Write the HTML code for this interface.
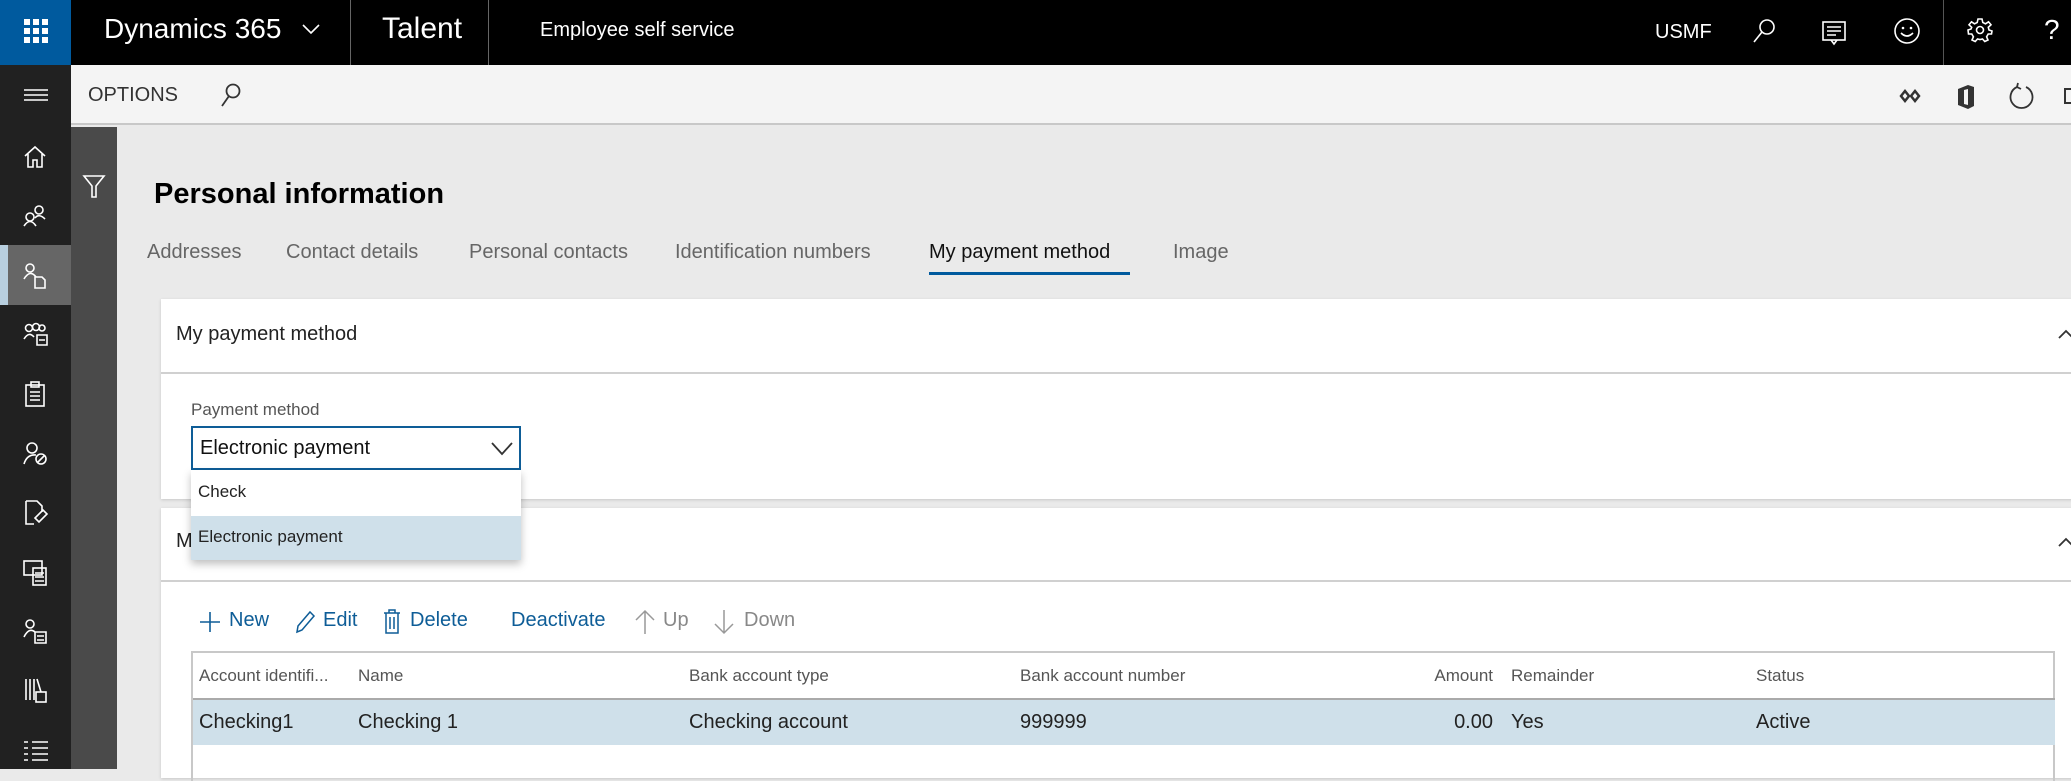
<!DOCTYPE html>
<html><head><meta charset="utf-8"><style>
*{margin:0;padding:0;box-sizing:border-box}
body{width:2071px;height:769px;overflow:hidden;background:#eaeaea;font-family:"Liberation Sans",sans-serif;position:relative;color:#222}
.a{position:absolute;white-space:nowrap}
svg{position:absolute;overflow:visible}
.w{stroke:#fff;fill:none;stroke-width:1.6}
.k{stroke:#333;fill:none;stroke-width:1.8}
.bl{color:#0e5d97}
.g{color:#555}
</style></head><body>
<!-- top bar -->
<div class="a" style="left:0;top:0;width:2071px;height:65px;background:#000"></div>
<div class="a" style="left:0;top:0;width:71px;height:65px;background:#005a9e"></div>
<svg style="left:24px;top:19px" width="26" height="26"><g fill="#fff"><rect x="0" y="0" width="6" height="6"/><rect x="9" y="0" width="6" height="6"/><rect x="18" y="0" width="6" height="6"/><rect x="0" y="9" width="6" height="6"/><rect x="9" y="9" width="6" height="6"/><rect x="18" y="9" width="6" height="6"/><rect x="0" y="18" width="6" height="6"/><rect x="9" y="18" width="6" height="6"/><rect x="18" y="18" width="6" height="6"/></g></svg>
<div class="a" style="left:104px;top:13px;font-size:28px;color:#fff">Dynamics 365</div>
<svg style="left:302px;top:24px" width="18" height="12"><path d="M1 1 L9 9 L17 1" class="w" stroke-width="2"/></svg>
<div class="a" style="left:350px;top:0;width:1px;height:65px;background:#666"></div>
<div class="a" style="left:382px;top:12px;font-size:30px;color:#fff">Talent</div>
<div class="a" style="left:488px;top:0;width:1px;height:65px;background:#666"></div>
<div class="a" style="left:540px;top:19px;font-size:20px;color:#fff">Employee self service</div>
<div class="a" style="left:1655px;top:21px;font-size:20px;color:#fff">USMF</div>
<svg style="left:1752px;top:18px" width="26" height="26"><circle cx="15" cy="9" r="7" class="w"/><path d="M10 14 L2 24" class="w"/></svg>
<svg style="left:1822px;top:21px" width="26" height="26"><rect x="1" y="1" width="22" height="18" class="w"/><path d="M5 6h14M5 10h14M5 14h9M9 19l3 4 3-4" class="w"/></svg>
<svg style="left:1894px;top:18px" width="28" height="28"><circle cx="13" cy="13" r="12" class="w"/><circle cx="9" cy="10" r="1.3" fill="#fff"/><circle cx="17" cy="10" r="1.3" fill="#fff"/><path d="M7 15 Q13 21 19 15" class="w"/></svg>
<div class="a" style="left:1943px;top:0;width:1px;height:65px;background:#555"></div>
<svg style="left:1968px;top:18px" width="24" height="24"><circle cx="12" cy="12" r="3.5" class="w"/><path d="M10 1 H14 L14.8 4.5 L17.5 5.8 L20.5 3.8 L23 6.8 L20.3 9.3 L21 12 L24 13 V13 L23.5 16 L20.2 16 L18.6 18.8 L20 22 L16.8 23.5 L14.5 21 L12 21.5 L9.5 21 L7.2 23.5 L4 22 L5.4 18.8 L3.8 16 L0.5 16 L0 12 L3 11 L3.7 9.3 L1 6.8 L3.5 3.8 L6.5 5.8 L9.2 4.5 Z" class="w" stroke-width="1.5"/></svg>
<div class="a" style="left:2044px;top:14px;font-size:28px;color:#fff;font-weight:300">?</div>
<!-- left rail -->
<div class="a" style="left:0;top:65px;width:71px;height:704px;background:#212121"></div>
<div class="a" style="left:0;top:245px;width:71px;height:60px;background:#666"></div>
<div class="a" style="left:0;top:245px;width:8px;height:60px;background:#b8cfdf"></div>
<svg style="left:24px;top:89px" width="24" height="12"><path d="M0 1h24M0 6h24M0 11h24" class="w"/></svg>
<svg style="left:23px;top:145px" width="24" height="24"><path d="M2 11 L12 2 L22 11 M5 9 V22 H10 V15 H14 V22 H19 V9" class="w"/></svg>
<svg style="left:23px;top:203px" width="24" height="24"><circle cx="7" cy="14" r="4" class="w"/><path d="M1 23 Q7 14 13 23" class="w"/><circle cx="16" cy="7" r="4" class="w"/><path d="M12 15 Q16 10 22 16" class="w"/></svg>
<svg style="left:23px;top:263px" width="24" height="26"><circle cx="7" cy="5" r="4" class="w"/><path d="M1 16 Q7 6 13 14" class="w"/><path d="M12 14 H19 L22 17 V25 H12 Z" class="w"/></svg>
<svg style="left:23px;top:322px" width="26" height="24"><circle cx="6" cy="6" r="3.5" class="w"/><circle cx="13" cy="5" r="3.5" class="w"/><circle cx="19" cy="6" r="3" class="w"/><path d="M1 17 Q6 9 11 15 M14 13 h10 v10 h-10 z M16 18 h6" class="w"/></svg>
<svg style="left:25px;top:381px" width="22" height="26"><rect x="1" y="4" width="18" height="21" class="w"/><rect x="6" y="1" width="8" height="5" class="w"/><path d="M5 11h10M5 15h10M5 19h10" class="w"/></svg>
<svg style="left:23px;top:441px" width="26" height="26"><circle cx="9" cy="7" r="5" class="w"/><path d="M1 23 Q4 13 13 14" class="w"/><circle cx="18" cy="18" r="5" class="w"/><path d="M15 21 L21 15" class="w"/></svg>
<svg style="left:25px;top:500px" width="24" height="26"><path d="M1 1 H12 L17 6 V12 M1 1 V24 H9" class="w"/><path d="M10 18 l4 4 l8 -8 l-4 -4 z" class="w"/></svg>
<svg style="left:23px;top:560px" width="26" height="26"><rect x="1" y="1" width="18" height="14" class="w"/><rect x="10" y="8" width="13" height="17" class="w" fill="#212121"/><path d="M12 13h9M12 17h9M12 21h9" class="w"/></svg>
<svg style="left:23px;top:619px" width="26" height="26"><circle cx="7" cy="5" r="4" class="w"/><path d="M1 18 Q6 8 12 13 M12 13 h11 v11 h-11 z M14 17 h7 M14 21h7" class="w"/></svg>
<svg style="left:24px;top:678px" width="24" height="26"><path d="M2 1 V22 M6 1 V22 M10 1 V22 M13 1 L17 14" class="w"/><rect x="12" y="14" width="10" height="10" class="w"/></svg>
<svg style="left:23px;top:740px" width="26" height="24"><path d="M9 2h16M9 8h16M9 14h16M9 20h16M1 2h4M1 8h4M1 14h4M1 20h4" class="w"/></svg>
<!-- options bar -->
<div class="a" style="left:71px;top:65px;width:2000px;height:60px;background:#f4f4f4;border-bottom:2px solid #c8c8c8"></div>
<div class="a" style="left:88px;top:84px;font-size:20px;color:#333">OPTIONS</div>
<svg style="left:218px;top:83px" width="26" height="26"><circle cx="15" cy="8" r="6.5" class="k" stroke-width="1.5"/><path d="M11 13 L4 23" class="k" stroke-width="1.5"/></svg>
<svg style="left:1900px;top:88px" width="22" height="16"><path d="M1 8 L5 3 L9 8 L5 13 Z M11 8 L15 3 L19 8 L15 13 Z" stroke="#333" stroke-width="2.5" fill="none"/></svg>
<svg style="left:1956px;top:84px" width="20" height="26"><path d="M2 5 L12 1 L18 3 V22 L12 25 L2 21 Z" fill="#333"/><path d="M8 6 L12 5 V21 L8 20 Z" fill="#f4f4f4"/></svg>
<svg style="left:2009px;top:83px" width="26" height="28"><path d="M8 4 A11 11 0 1 0 17 4" class="k" stroke-width="1.4"/><path d="M9 0 L8 4 L12 6" class="k" stroke-width="1.4"/></svg>
<div class="a" style="left:2064px;top:88px;width:10px;height:16px;border:2px solid #333"></div>
<!-- filter sidebar -->
<div class="a" style="left:71px;top:127px;width:46px;height:642px;background:#4a4a4a"></div>
<svg style="left:83px;top:175px" width="22" height="24"><path d="M1 1 H21 L13 11 V22 H9 V11 Z" class="w"/></svg>
<!-- title & tabs -->
<div class="a" style="left:154px;top:178px;font-size:29px;font-weight:bold;color:#000">Personal information</div>
<div class="a g" style="left:147px;top:241px;font-size:20px;color:#666">Addresses</div>
<div class="a g" style="left:286px;top:241px;font-size:20px;color:#666">Contact details</div>
<div class="a g" style="left:469px;top:241px;font-size:20px;color:#666">Personal contacts</div>
<div class="a g" style="left:675px;top:241px;font-size:20px;color:#666">Identification numbers</div>
<div class="a" style="left:929px;top:241px;font-size:20px;color:#111">My payment method</div>
<div class="a" style="left:929px;top:272px;width:201px;height:3px;background:#005a9e"></div>
<div class="a g" style="left:1173px;top:241px;font-size:20px;color:#666">Image</div>
<!-- card 1 -->
<div class="a" style="left:161px;top:299px;width:1920px;height:200px;background:#fff;box-shadow:0 1px 3px rgba(0,0,0,.15)"></div>
<div class="a" style="left:176px;top:323px;font-size:20px;color:#222">My payment method</div>
<svg style="left:2058px;top:329px" width="14" height="10"><path d="M1 9 L8 2 L15 9" class="k" stroke="#666" stroke-width="1.5"/></svg>
<div class="a" style="left:161px;top:372px;width:1920px;height:2px;background:#d0d0d0"></div>
<div class="a" style="left:191px;top:400px;font-size:17px;color:#555">Payment method</div>
<div class="a" style="left:191px;top:426px;width:330px;height:44px;border:2px solid #0e5d97;background:#fff"></div>
<div class="a" style="left:200px;top:437px;font-size:20px;color:#111">Electronic payment</div>
<svg style="left:491px;top:442px" width="22" height="14"><path d="M1 1 L11 12 L21 1" class="k" stroke="#444" stroke-width="1.5"/></svg>
<!-- card 2 -->
<div class="a" style="left:161px;top:508px;width:1920px;height:270px;background:#fff;box-shadow:0 1px 3px rgba(0,0,0,.15)"></div>
<div class="a" style="left:176px;top:530px;font-size:20px;color:#222">M</div>
<svg style="left:2058px;top:537px" width="14" height="10"><path d="M1 9 L8 2 L15 9" class="k" stroke="#666" stroke-width="1.5"/></svg>
<div class="a" style="left:161px;top:580px;width:1920px;height:2px;background:#d0d0d0"></div>
<!-- toolbar -->
<svg style="left:199px;top:611px" width="22" height="22"><path d="M11 1 V21 M1 11 H21" stroke="#0e5d97" stroke-width="1.6"/></svg>
<div class="a bl" style="left:229px;top:609px;font-size:20px">New</div>
<svg style="left:294px;top:610px" width="22" height="24"><path d="M3 22 L4 16 L16 2 L20 6 L8 20 Z" stroke="#0e5d97" stroke-width="1.5" fill="none"/></svg>
<div class="a bl" style="left:323px;top:609px;font-size:20px">Edit</div>
<svg style="left:383px;top:609px" width="18" height="26"><path d="M1 4 H17 M6 4 V1 H12 V4 M3 4 V24 H15 V4 M7 8 V20 M11 8 V20" stroke="#0e5d97" stroke-width="1.5" fill="none"/></svg>
<div class="a bl" style="left:410px;top:609px;font-size:20px">Delete</div>
<div class="a bl" style="left:511px;top:609px;font-size:20px">Deactivate</div>
<svg style="left:634px;top:609px" width="22" height="26"><path d="M11 25 V2 M2 11 L11 2 L20 11" stroke="#999" stroke-width="1.5" fill="none"/></svg>
<div class="a" style="left:663px;top:609px;font-size:20px;color:#888">Up</div>
<svg style="left:713px;top:609px" width="22" height="26"><path d="M11 1 V24 M2 15 L11 24 L20 15" stroke="#999" stroke-width="1.5" fill="none"/></svg>
<div class="a" style="left:744px;top:609px;font-size:20px;color:#888">Down</div>
<!-- grid -->
<div class="a" style="left:191px;top:651px;width:1864px;height:130px;border:2px solid #c8c8c8;border-bottom:none"></div>
<div class="a" style="left:193px;top:698px;width:1862px;height:2px;background:#aaa"></div>
<div class="a" style="left:193px;top:700px;width:1862px;height:45px;background:#cfe0ea"></div>
<div class="a g" style="left:199px;top:666px;font-size:17px">Account identifi...</div>
<div class="a g" style="left:358px;top:666px;font-size:17px">Name</div>
<div class="a g" style="left:689px;top:666px;font-size:17px">Bank account type</div>
<div class="a g" style="left:1020px;top:666px;font-size:17px">Bank account number</div>
<div class="a g" style="left:1393px;top:666px;font-size:17px;width:100px;text-align:right">Amount</div>
<div class="a g" style="left:1511px;top:666px;font-size:17px">Remainder</div>
<div class="a g" style="left:1756px;top:666px;font-size:17px">Status</div>
<div class="a" style="left:199px;top:711px;font-size:20px">Checking1</div>
<div class="a" style="left:358px;top:711px;font-size:20px">Checking 1</div>
<div class="a" style="left:689px;top:711px;font-size:20px">Checking account</div>
<div class="a" style="left:1020px;top:711px;font-size:20px">999999</div>
<div class="a" style="left:1393px;top:711px;font-size:20px;width:100px;text-align:right">0.00</div>
<div class="a" style="left:1511px;top:711px;font-size:20px">Yes</div>
<div class="a" style="left:1756px;top:711px;font-size:20px">Active</div>
<!-- dropdown list -->
<div class="a" style="left:191px;top:470px;width:330px;height:90px;background:#fff;box-shadow:0 4px 8px rgba(0,0,0,.25)"></div>
<div class="a" style="left:191px;top:516px;width:330px;height:44px;background:#cfe0ea"></div>
<div class="a" style="left:198px;top:482px;font-size:17px;color:#222">Check</div>
<div class="a" style="left:198px;top:527px;font-size:17px;color:#222">Electronic payment</div>
</body></html>
